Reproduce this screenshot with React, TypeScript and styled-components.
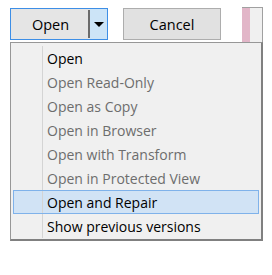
import styled, { createGlobalStyle } from "styled-components";

const GlobalStyle = createGlobalStyle`
  body {
    margin: 0;
    background: #ffffff;
    font-family: "Open Sans", "Liberation Sans", sans-serif;
  }
`;

const Page = styled.div`
  padding: 8px 0 0 10px;
  width: 262px;
`;

const ButtonRow = styled.div`
  display: flex;
  align-items: flex-start;
  height: 34px;
`;

const SplitButton = styled.div`
  display: flex;
  width: 98px;
  height: 32px;
  box-sizing: border-box;
  border: 1px solid #3d8ee6;
  background: #e5e5e5;
`;

const SplitMain = styled.div`
  flex: 1;
  display: flex;
  align-items: center;
  justify-content: center;
  font-size: 14.5px;
  color: #000;
  padding-left: 2px;
`;

const Divider = styled.div`
  width: 2px;
  margin: 1px 0;
  background: #6b6b6b;
`;

const ArrowPart = styled.div`
  width: 17px;
  display: flex;
  align-items: center;
  justify-content: center;
  background: #cce4f7;
`;

const Arrow = styled.div`
  width: 0;
  height: 0;
  border-left: 5px solid transparent;
  border-right: 5px solid transparent;
  border-top: 5px solid #000;
`;

const Button = styled.div`
  width: 98px;
  height: 32px;
  margin-left: 15px;
  box-sizing: border-box;
  border: 1px solid #adadad;
  background: #e1e1e1;
  display: flex;
  align-items: center;
  justify-content: center;
  font-size: 14.5px;
  color: #000;
`;

const BackPanel = styled.div`
  display: flex;
  margin-left: 21px;
  margin-top: -1px;
  height: 35px;
  width: 21px;
  box-sizing: border-box;
  border-top: 1px solid #a0a0a0;
  border-right: 1px solid #a0a0a0;
`;

const Pink = styled.div`
  width: 8px;
  background: #e2b6c8;
`;

const Grey = styled.div`
  flex: 1;
  background: #f0f0f0;
`;

const Menu = styled.div`
  width: 253px;
  box-sizing: border-box;
  background: #f0f0f0;
  border-top: 1px solid #979797;
  border-left: 1px solid #979797;
  border-right: 2px solid #808080;
  border-bottom: 2px solid #808080;
  padding: 3px 0 1px;
`;

const Item = styled.div<{ disabled?: boolean; active?: boolean }>`
  height: 24px;
  margin: 0 2px;
  box-sizing: border-box;
  border: 1px solid ${({ active }) => (active ? "#7fb2ea" : "transparent")};
  background-color: ${({ active }) => (active ? "#d1e3f5" : "transparent")};
  background-image: linear-gradient(
    to right,
    transparent 28px,
    #d4d4d4 28px,
    #d4d4d4 29px,
    transparent 29px
  );
  padding-left: 33px;
  display: flex;
  align-items: center;
  font-size: 14px;
  color: ${({ disabled }) => (disabled ? "#6d6d6d" : "#000")};
  white-space: nowrap;
`;

const items = [
  { label: "Open" },
  { label: "Open Read-Only", disabled: true },
  { label: "Open as Copy", disabled: true },
  { label: "Open in Browser", disabled: true },
  { label: "Open with Transform", disabled: true },
  { label: "Open in Protected View", disabled: true },
  { label: "Open and Repair", active: true },
  { label: "Show previous versions" },
];

export default function App() {
  return (
    <>
      <GlobalStyle />
      <Page>
        <ButtonRow>
          <SplitButton>
            <SplitMain>Open</SplitMain>
            <Divider />
            <ArrowPart>
              <Arrow />
            </ArrowPart>
          </SplitButton>
          <Button>Cancel</Button>
          <BackPanel>
            <Pink />
            <Grey />
          </BackPanel>
        </ButtonRow>
        <Menu>
          {items.map((item) => (
            <Item key={item.label} disabled={item.disabled} active={item.active}>
              {item.label}
            </Item>
          ))}
        </Menu>
      </Page>
    </>
  );
}
